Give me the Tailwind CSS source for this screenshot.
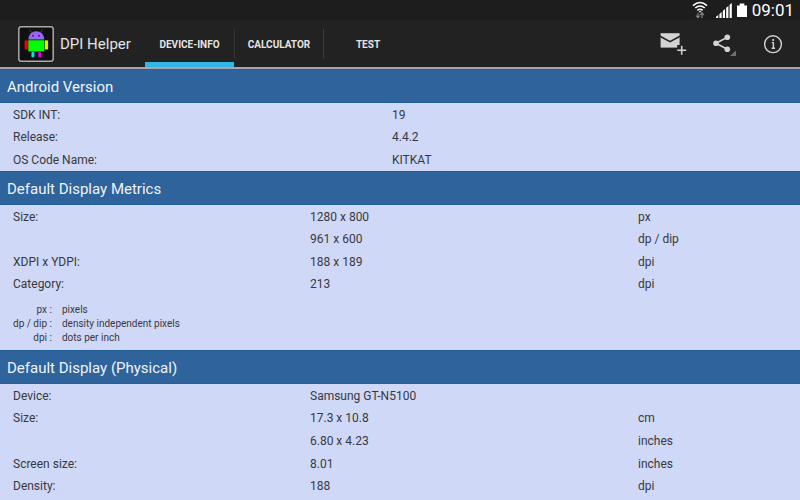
<!DOCTYPE html>
<html lang="en">
<head>
  <meta charset="UTF-8" />
  <meta name="viewport" content="width=device-width, initial-scale=1.0"/>
  <title>DPI Helper</title>
  <script src="https://cdn.jsdelivr.net/npm/@tailwindcss/browser@4"></script>
</head>
<body class="min-h-screen overflow-hidden bg-[#cfd8f6] font-['Roboto',sans-serif] text-[#38393f]">

  <!-- Status bar -->
  <div class="flex h-5 items-center justify-end bg-[#1d1d1d] pr-[6px] text-white">
    <svg class="mr-2 h-5 w-4" viewBox="0 0 16 20" fill="none" stroke="currentColor" stroke-width="1.6">
      <path d="M1 5.6Q8 -.6 15 5.6M3.2 8Q8 4 12.8 8M5.3 10.3Q8 8.2 10.7 10.3"/>
      <path d="M6.7 11h2.6L8 12.8z" fill="currentColor" stroke="none"/>
      <path d="M6 17.5v-4.5M4.3 15.6L6 17.6L7.7 15.6M10 18v-5M8.3 14.8L10 12.8L11.7 14.8" stroke="#858585" stroke-width="1.2"/>
    </svg>
    <svg class="mr-[5px] h-5 w-4" viewBox="0 0 16 20" fill="currentColor">
      <path d="M0 18v-1.2L2.2 15v3zM3.4 18v-4L5.6 12v6zM6.8 18v-7.1L9 9v9zM10.2 18V7.8L12.4 6v12zM13.6 18V4.8L15.8 3v15z"/>
    </svg>
    <svg class="mr-[5px] h-5 w-[10px]" viewBox="0 0 10 20" fill="currentColor">
      <path d="M2.7 3.5h4.6v2H10v11.5H0V5.5h2.7z"/>
    </svg>
    <span class="text-[17px] leading-5">09:01</span>
  </div>

  <!-- Action bar -->
  <header class="flex h-[49px] items-stretch border-b-2 border-[#a5a4b5] bg-[#222222] text-[#e4e4e4]">
    <div class="flex w-[145px] shrink-0 items-center gap-[6px] pl-[18px]">
      <svg class="size-9" viewBox="0 0 36 36">
        <rect x=".8" y=".8" width="34.4" height="34.4" rx="2.5" fill="#101012" stroke="#aaaaaa" stroke-width="1.5"/>
        <path d="M13.4 6.6L11.6 3.4M22.8 6.6L24.6 3.4" stroke="#463f60" stroke-width="1"/>
        <path d="M10.4 13.4C10.4 2.4 26.2 2.4 26.2 13.4z" fill="#9966f5"/>
        <rect x="6.6" y="14.2" width="3.3" height="9.4" rx="1.2" fill="#f00000"/>
        <rect x="26.8" y="14.2" width="3.3" height="9.4" rx="1.2" fill="#f5e500"/>
        <path d="M10.3 14.2h16v10q0 1.3-1.3 1.3h-13.4q-1.3 0-1.3-1.3z" fill="#00ff00"/>
        <rect x="13.4" y="26" width="3" height="5.2" rx="1" fill="#00e5ee"/>
        <rect x="20.2" y="26" width="3" height="5.2" rx="1" fill="#e600e0"/>
        <circle cx="15" cy="9.7" r=".9" fill="#302055"/>
        <circle cx="21" cy="9.7" r=".9" fill="#302055"/>
      </svg>
      <h1 class="pt-[2px] text-[15px] whitespace-nowrap">DPI Helper</h1>
    </div>

    <nav class="flex items-stretch text-[10px] font-bold">
      <button class="w-[89px] border-b-[5px] border-[#33b5e5] pt-[7px]">DEVICE-INFO</button>
      <span class="my-[9px] w-px bg-[#363636]"></span>
      <button class="w-[88px] pt-[2px]">CALCULATOR</button>
      <span class="my-[9px] w-px bg-[#3e3e3e]"></span>
      <button class="w-[88px] pt-[2px]">TEST</button>
    </nav>

    <div class="ml-auto flex items-center gap-[24px] pr-[17px] text-[#d3d3d3]">
      <button aria-label="Send by mail">
        <svg class="h-6 w-7" viewBox="0 0 28 24">
          <path d="M1.6 1.2h19v14.4H1.6z" fill="currentColor"/>
          <path d="M1 4.2L11 9.6L21 4.2" fill="none" stroke="#222222" stroke-width="1.6"/>
          <path d="M18.2 13h9v9h-9z" fill="#222222"/>
          <path d="M22.7 13.8v9M18.2 18.3h9" stroke="currentColor" stroke-width="1.6"/>
        </svg>
      </button>
      <button aria-label="Share">
        <svg class="h-6 w-7" viewBox="0 0 28 24">
          <path d="M16.3 5.3L5 11.2L16.3 17.3" fill="none" stroke="currentColor" stroke-width="1.7"/>
          <g fill="currentColor">
            <circle cx="5" cy="11.2" r="2.8"/>
            <circle cx="16.3" cy="5.3" r="2.8"/>
            <circle cx="16.3" cy="17.3" r="2.8"/>
          </g>
          <path d="M25 18.4v5.6h-6z" fill="#717171"/>
        </svg>
      </button>
      <button aria-label="About">
        <svg class="h-6 w-5" viewBox="0 0 20 24" fill="none" stroke="currentColor">
          <circle cx="10" cy="12.2" r="8.4" stroke-width="1.4"/>
          <path d="M8.8 10.6h1.6v5.4M8.6 16.2h3.4" stroke-width="1.4"/>
          <path d="M9.3 8h1.8" stroke-width="1.9"/>
        </svg>
      </button>
    </div>
  </header>

  <main>
    <section>
      <h2 class="h-[34px] border-y border-[#205f98] bg-[#2e639b] pt-px pl-[7px] text-[15px] leading-8 text-[#f0f3f8]">Android Version</h2>
      <table class="h-[68px] w-full table-fixed text-left text-[12px] leading-5 [&_td]:pt-px [&_th]:pt-px">
        <tr><th class="w-[49%] pl-[13px] font-normal">SDK INT:</th><td>19</td></tr>
        <tr><th class="pl-[13px] font-normal">Release:</th><td>4.4.2</td></tr>
        <tr><th class="pl-[13px] font-normal">OS Code Name:</th><td>KITKAT</td></tr>
      </table>
    </section>

    <section>
      <h2 class="h-[34px] border-y border-[#205f98] bg-[#2e639b] pt-px pl-[7px] text-[15px] leading-8 text-[#f0f3f8]">Default Display Metrics</h2>
      <table class="h-[90px] w-full table-fixed text-left text-[12px] leading-5 [&_td]:pt-px [&_th]:pt-px">
        <tr><th class="w-[38.75%] pl-[13px] font-normal">Size:</th><td class="w-[41%]">1280 x 800</td><td>px</td></tr>
        <tr><td></td><td>961 x 600</td><td>dp / dip</td></tr>
        <tr><th class="pl-[13px] font-normal">XDPI x YDPI:</th><td>188 x 189</td><td>dpi</td></tr>
        <tr><th class="pl-[13px] font-normal">Category:</th><td>213</td><td>dpi</td></tr>
      </table>
      <dl class="grid grid-cols-[auto_1fr] gap-x-[10px] pt-2 pb-[5px] pl-[13px] text-[10px] leading-[14px]">
        <dt class="text-right">px :</dt><dd>pixels</dd>
        <dt class="text-right">dp / dip :</dt><dd>density independent pixels</dd>
        <dt class="text-right">dpi :</dt><dd>dots per inch</dd>
      </dl>
    </section>

    <section>
      <h2 class="h-[34px] border-y border-[#205f98] bg-[#2e639b] pt-px pl-[7px] text-[15px] leading-8 text-[#f0f3f8]">Default Display (Physical)</h2>
      <table class="h-[113px] w-full table-fixed text-left text-[12px] leading-5 [&_td]:pt-px [&_th]:pt-px">
        <tr><th class="w-[38.75%] pl-[13px] font-normal">Device:</th><td class="w-[41%]">Samsung GT-N5100</td><td></td></tr>
        <tr><th class="pl-[13px] font-normal">Size:</th><td>17.3 x 10.8</td><td>cm</td></tr>
        <tr><td></td><td>6.80 x 4.23</td><td>inches</td></tr>
        <tr><th class="pl-[13px] font-normal">Screen size:</th><td>8.01</td><td>inches</td></tr>
        <tr><th class="pl-[13px] font-normal">Density:</th><td>188</td><td>dpi</td></tr>
      </table>
    </section>
  </main>

</body>
</html>
